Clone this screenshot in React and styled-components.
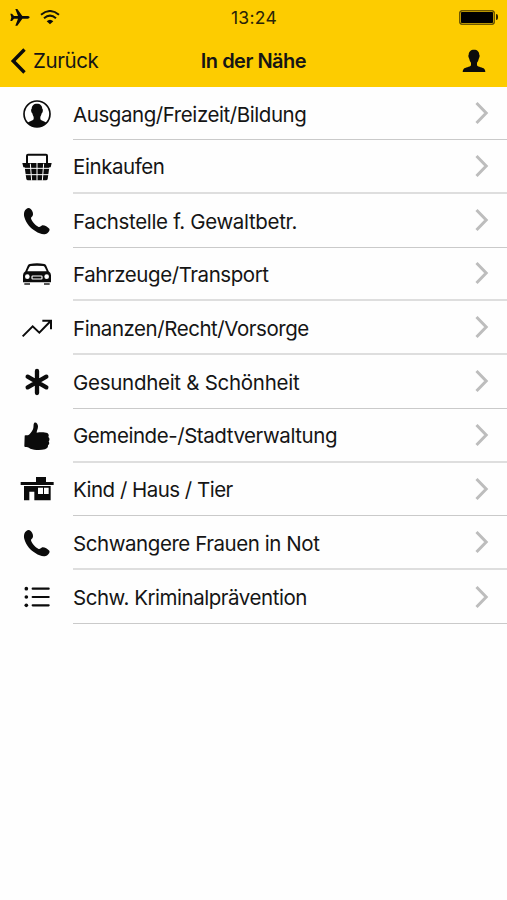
import React from 'react'
import styled, { createGlobalStyle } from 'styled-components';

const Phone = () => (
  <path d="M23 17 C27 14 32 15 36 19 C41 24 44 33 41 38 C39 41 36 42 36 46 C38 56 50 68 59 72 C64 73 66 68 70 67 C76 66 86 72 91 77 C94 82 87 91 80 93 C70 95 59 91 50 85 C35 76 21 61 16 42 C14 32 15 22 23 17 Z" />
)

const Person = () => (
  <>
    <circle cx="54" cy="54" r="39" fill="#fff" stroke="#0b0b0b" strokeWidth="5" />
    <path d="M54 23 C64 23 70 29 70 39 C72 39 72 43 71 47 C70 50 69 51 68 52 C67 58 65 61 64 63 V70 C67 75 77 76 82 80 C75 88 65 93 54 93 C43 93 33 88 26 80 C31 76 41 75 44 70 V63 C43 61 41 58 40 52 C39 51 38 50 37 47 C36 43 36 39 38 39 C38 29 44 23 54 23 Z" />
  </>
)

const Basket = () => (
  <>
    <path d="M24 43 V20 Q24 17 27 17 H81 Q84 17 84 20 V43" fill="none" stroke="#0b0b0b" strokeWidth="6" />
    <path d="M10 42 H98 L95 55 H91 L86 90 Q85 94 81 94 H27 Q23 94 22 90 L17 55 H13 Z" />
    <path d="M14 58 H94 M17 77 H91 M34 44 L38 95 M54 42 V95 M74 44 L70 95" fill="none" stroke="#fff" strokeWidth="3" />
  </>
)

const Car = () => (
  <>
    <path fillRule="evenodd" d="M32 24 Q54 20 76 24 Q80 25 82 29 L89 46 Q96 50 96 58 V79 H12 V58 Q12 50 19 46 L26 29 Q28 25 32 24 Z M35 30 Q32 31 30 35 L25 46 H83 L78 35 Q76 31 73 30 Q54 28 35 30 Z" />
    <rect x="16" y="81" width="17" height="6" fill="#555" />
    <rect x="75" y="81" width="17" height="6" fill="#555" />
    <circle cx="25" cy="62" r="7" fill="#fff" />
    <circle cx="83" cy="62" r="7" fill="#fff" />
    <rect x="39" y="60" width="30" height="9" rx="2" fill="none" stroke="#fff" strokeWidth="3.500" />
  </>
)

const Trend = () => (
  <path d="M11 79 L41 49 L61 68 L95 33 M70 32 H96 V58" fill="none" stroke="#0b0b0b" strokeWidth="6" />
)

const Asterisk = () => (
  <path d="M54 21 V87 M26 38 L82 70 M26 70 L82 38" fill="none" stroke="#0b0b0b" strokeWidth="13" strokeLinecap="round" />
)

const Thumb = () => (
  <path d="M17 55 Q16 52 20 52 H27 C32 50 38 42 42 34 C45 27 42 18 46 14 C51 11 57 17 57 25 C57 33 53 39 53 44 C64 42 77 42 85 45 C90 48 90 54 88 57 C93 61 92 67 89 70 C92 75 91 80 87 82 C88 88 84 92 78 94 C63 97 45 96 34 92 C28 88 24 87 19 87 Q16 87 16 84 Z" />
)

const House = () => (
  <>
    <path d="M51 18 H81 V33 H104 V42 H5 V33 H51 Z" />
    <path fillRule="evenodd" d="M15 45 H95 V88 H46 V62 H31 V88 H15 Z M57 50 V69 H72 V50 Z M75 50 V69 H89 V50 Z" />
  </>
)

const List = () => (
  <>
    <circle cx="22" cy="29" r="5.500" />
    <circle cx="22" cy="54" r="5.500" />
    <circle cx="22" cy="79" r="5.500" />
    <path d="M41 29 H89 M41 54 H89 M41 79 H89" stroke="#0b0b0b" strokeWidth="6.500" strokeLinecap="round" />
  </>
)

const categories = [
  { label: 'Ausgang/Freizeit/Bildung', icon: Person, tracking: -0.43, thin: true },
  { label: 'Einkaufen', icon: Basket, tracking: -0.42 },
  { label: 'Fachstelle f. Gewaltbetr.', icon: Phone, tracking: -0.34, thin: true },
  { label: 'Fahrzeuge/Transport', icon: Car, tracking: -0.43 },
  { label: 'Finanzen/Recht/Vorsorge', icon: Trend, tracking: -0.45 },
  { label: 'Gesundheit & Schönheit', icon: Asterisk, tracking: -0.28, thin: true },
  { label: 'Gemeinde-/Stadtverwaltung', icon: Thumb, tracking: -0.44 },
  { label: 'Kind / Haus / Tier', icon: House, tracking: -0.52, thin: true },
  { label: 'Schwangere Frauen in Not', icon: Phone, tracking: -0.44 },
  { label: 'Schw. Kriminalprävention', icon: List, tracking: -0.46, thin: true },
]

export default function App() {
  return (
    <>
      <GlobalStyle />
      <Header>
        <StatusBar>
          <StatusIcons>
            <svg width="20" height="18" viewBox="0 0 60 54">
              <path d="M1 17 H6 L12 24 H24 L16 3 H22 L37 24 H54 Q59 25 59 28 Q59 31 54 32 H37 L22 53 H16 L24 32 H12 L6 39 H1 L4 28 Z" />
            </svg>
            <svg width="20" height="15" viewBox="0 0 60 45">
              <path d="M3 14 Q30 -8 57 14 M12 25 Q30 9 48 25" fill="none" stroke="#16140a" strokeWidth="6" />
              <path d="M20 34 Q30 25 40 34 L30 43 Z" />
            </svg>
          </StatusIcons>
          <Clock>13:24</Clock>
          <Battery><span /></Battery>
        </StatusBar>
        <NavBar>
          <BackButton type="button">
            <svg width="16" height="26" viewBox="0 0 16 26">
              <path d="M14.500 1.500 L3.200 13 L14.500 24.500" fill="none" stroke="#0b0b0b" strokeWidth="3.400" />
            </svg>
            <span>Zurück</span>
          </BackButton>
          <Title>In der Nähe</Title>
          <ProfileButton type="button">
            <svg width="24" height="24" viewBox="0 0 72 72">
              <path d="M36 2 C46 2 52 8 52 18 C54 19 53 24 50 30 C49 36 47 38 45 41 V49 C48 55 63 55 67 60 Q70 63 70 69 H2 Q2 63 5 60 C9 55 24 55 27 49 V41 C25 38 23 36 22 30 C19 24 18 19 20 18 C20 8 26 2 36 2 Z" />
            </svg>
          </ProfileButton>
        </NavBar>
      </Header>
      <CategoryList>
        {categories.map(({ label, icon: Icon, tracking, thin }) => (
          <Category key={label}>
            <CategoryIcon viewBox="0 0 108 108"><Icon /></CategoryIcon>
            <CategoryBody $thin={thin}>
              <Label $tracking={tracking}>{label}</Label>
              <svg width="15" height="24" viewBox="0 0 15 24">
                <path d="M2.500 2 L12.200 12 L2.500 22" fill="none" stroke="#bdbdbd" strokeWidth="3" />
              </svg>
            </CategoryBody>
          </Category>
        ))}
      </CategoryList>
    </>
  )
}

const GlobalStyle = createGlobalStyle`
  * {
    box-sizing: border-box;
  }
  body {
    margin: 0;
    background-color: #fefefe;
    color: #151515;
    font-family: Inter, 'Liberation Sans', sans-serif;
  }
  button {
    padding: 0;
    border: none;
    background: none;
    color: inherit;
    font-family: inherit;
  }
  svg {
    display: block;
    fill: #0b0b0b;
  }
`

const Header = styled.header`
  height: 87px;
  background-color: #fdcc00;
`

const StatusBar = styled.div`
  display: grid;
  grid-template-columns: 1fr auto 1fr;
  align-items: center;
  height: 34px;
  padding: 0 9px 0 10px;
`

const StatusIcons = styled.div`
  display: flex;
  align-items: center;
  gap: 10px;
`

const Clock = styled.span`
  font-size: 17.5px;
  letter-spacing: 0.3px;
  color: #2a2408;
`

const Battery = styled.div`
  display: flex;
  align-items: center;
  justify-self: end;
  span {
    width: 36px;
    height: 15px;
    border: 1px solid #6e5800;
    border-radius: 3px;
    background-color: #000;
    box-shadow: inset 0 0 0 1px #b89400;
  }
  &::after {
    content: '';
    width: 2px;
    height: 6px;
    margin-left: 1px;
    border-radius: 0 2px 2px 0;
    background-color: #302700;
  }
`

const NavBar = styled.div`
  display: grid;
  grid-template-columns: 1fr auto 1fr;
  align-items: center;
  height: 53px;
  padding: 0 10px;
`

const BackButton = styled.button`
  display: flex;
  align-items: center;
  gap: 7px;
  font-size: 20.5px;
  letter-spacing: -0.4px;
`

const Title = styled.h1`
  margin: 0;
  font-size: 20px;
  font-weight: 600;
  letter-spacing: -0.5px;
`

const ProfileButton = styled.button`
  justify-self: end;
  margin-right: 11px;
`

const CategoryList = styled.ul`
  margin: 0;
  padding: 0;
  list-style: none;
`

const Category = styled.li`
  display: flex;
  align-items: center;
  height: 53.78px;
  padding-left: 19px;
  &:first-child {
    height: 53px;
  }
`

const CategoryIcon = styled.svg`
  flex: none;
  width: 36px;
  height: 36px;
`

const CategoryBody = styled.div`
  display: flex;
  flex: 1;
  align-items: center;
  justify-content: space-between;
  height: 100%;
  margin-left: 18px;
  padding-right: 18px;
  border-bottom: ${({ $thin }) => ($thin ? '1px solid #cacaca' : '2px solid #dedede')};
`

const Label = styled.span`
  padding-top: 2px;
  font-size: 20.5px;
  letter-spacing: ${({ $tracking }) => $tracking}px;
  white-space: nowrap;
`
